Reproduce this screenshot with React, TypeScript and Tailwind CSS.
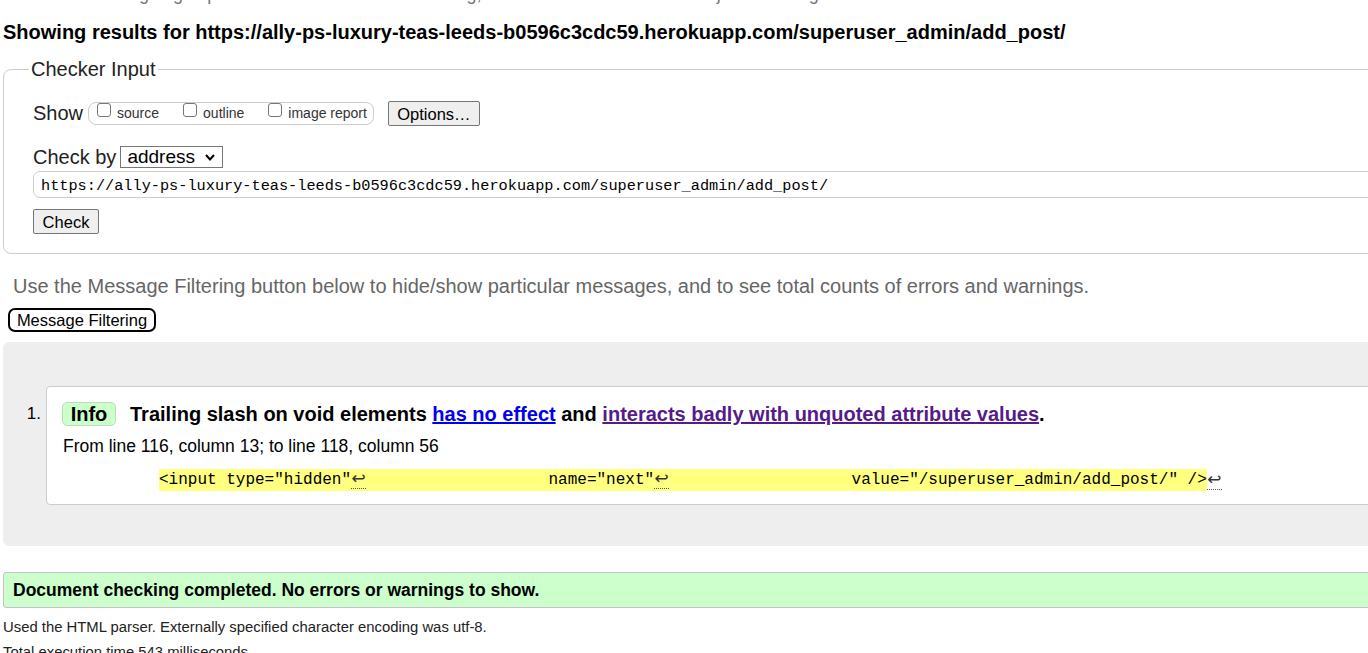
import React from "react";

const SP = "                   ";

function Checkbox({ label }: { label: string }) {
  return (
    <span className="flex items-center gap-[6px]">
      <span className="mb-[7px] inline-block h-[14px] w-[14px] rounded-[3px] border border-[#767676] bg-white" />
      <span className="text-[14px] text-[#333]">{label}</span>
    </span>
  );
}

function Lf({ hl }: { hl?: boolean }) {
  return (
    <span
      className={
        "inline-block w-[15px] border-b border-dotted border-[#555] text-center font-['DejaVu_Sans',sans-serif] text-[17px] leading-[19px] text-[#333] " +
        (hl ? "bg-[#ffff80]" : "bg-white")
      }
    >
      ↩
    </span>
  );
}

export default function App() {
  return (
    <div className="h-[653px] w-[1368px] overflow-hidden bg-white font-['Liberation_Sans',Arial,sans-serif] text-black">
      <div className="w-[1440px]">
        <p className="-mt-[16px] h-[20px] pl-[3px] text-[18px] leading-[20px] text-[#777]">
          This tool is an ongoing experiment in better HTML checking, and its behavior remains subject to change
        </p>

        <h2 className="mt-[16px] pl-[3px] text-[20px] font-bold leading-[24px]">
          Showing results for https://ally-ps-luxury-teas-leeds-b0596c3cdc59.herokuapp.com/superuser_admin/add_post/
        </h2>

        <fieldset className="ml-[3px] mt-[13px] rounded-l-[8px] border border-[#ccc] pb-[19px] pl-[29px]">
          <legend className="-ml-[4px] px-[2px] text-[20px] leading-[24px] text-[#222]">Checker Input</legend>

          <div className="mt-[19px] flex h-[26px] items-center">
            <span className="text-[20px] text-[#222]">Show</span>
            <div className="ml-[5px] flex h-[23px] items-center gap-[24px] rounded-[8px] border border-[#ccc] pl-[8px] pr-[6px]">
              <Checkbox label="source" />
              <Checkbox label="outline" />
              <Checkbox label="image report" />
            </div>
            <button className="ml-[14px] h-[25px] w-[92px] rounded-[2px] border border-[#767676] bg-[#efefef] text-[16.5px] text-black">
              Options…
            </button>
          </div>

          <div className="mt-[19px] flex h-[24px] items-center">
            <span className="text-[20px] text-[#222]">Check by</span>
            <div className="ml-[4px] flex h-[22px] w-[103px] items-center justify-between border border-[#767676] bg-white pl-[6px] pr-[7px]">
              <span className="text-[19px] leading-[20px]">address</span>
              <svg width="10" height="7" viewBox="0 0 10 7">
                <polyline points="1,1 5,5.5 9,1" fill="none" stroke="#000" strokeWidth="2" />
              </svg>
            </div>
          </div>

          <div className="mt-[2px] flex h-[27px] items-center rounded-l-[7px] border border-[#ccc] pl-[7px] pt-[3px] font-['Liberation_Mono',monospace] text-[15.25px] text-black">
            https://ally-ps-luxury-teas-leeds-b0596c3cdc59.herokuapp.com/superuser_admin/add_post/
          </div>

          <button className="mt-[11px] block h-[25px] w-[66px] rounded-[2px] border border-[#767676] bg-[#efefef] text-[16.5px] leading-[20px] text-black">
            Check
          </button>
        </fieldset>

        <p className="mt-[20px] pl-[13px] text-[20px] leading-[24px] text-[#666]">
          Use the Message Filtering button below to hide/show particular messages, and to see total counts of errors and warnings.
        </p>

        <button className="ml-[8px] mt-[10px] block h-[24px] w-[148px] rounded-[7px] border-2 border-black bg-white text-[16.5px] leading-[20px] text-black">
          Message Filtering
        </button>

        <div className="ml-[3px] mt-[10px] rounded-l-[6px] bg-[#eee] pb-[41px] pt-[44px]">
          <div className="flex">
            <span className="w-[43px] pr-[5px] pt-[18px] text-right text-[17px] leading-[20px]">1.</span>
            <div className="flex-1 rounded-[4px] border border-[#ccc] bg-white pb-[15px] pl-[15px] pt-[15px]">
              <div className="flex h-[24px] items-center">
                <span className="flex h-[24px] w-[54px] items-center justify-center rounded-[5px] border border-[#b8e0b8] bg-[#ccffcc] text-[20px] font-bold">
                  Info
                </span>
                <span className="ml-[14px] text-[20px] font-bold">
                  Trailing slash on void elements{" "}
                  <span className="text-[#0000ee] underline">has no effect</span> and{" "}
                  <span className="text-[#551a8b] underline">interacts badly with unquoted attribute values</span>.
                </span>
              </div>
              <p className="mt-[10px] pl-[1px] text-[17.5px] leading-[20px]">
                From line 116, column 13; to line 118, column 56
              </p>
              <p className="ml-[97px] mt-[12px] flex h-[21px] items-center whitespace-pre pt-[2px] font-['Liberation_Mono',monospace] text-[16px] leading-[21px]">
                <span className="bg-[#ffff80]">
                  {'<input type="hidden"'}
                  <Lf hl />
                  {SP}
                  {'name="next"'}
                  <Lf hl />
                  {SP}
                  {'value="/superuser_admin/add_post/" />'}
                </span>
                <Lf />
              </p>
            </div>
          </div>
        </div>

        <div className="ml-[3px] mt-[26px] flex h-[36px] items-center rounded-l-[3px] border border-[#c4c0cc] bg-[#ccffcc] pl-[9px]">
          <span className="text-[17.5px] font-bold">Document checking completed. No errors or warnings to show.</span>
        </div>

        <p className="mt-[10px] pl-[3px] text-[14.85px] leading-[18px] text-[#222]">
          Used the HTML parser. Externally specified character encoding was utf-8.
        </p>
        <p className="mt-[7px] pl-[3px] text-[14.85px] leading-[18px] text-[#222]">Total execution time 543 milliseconds.</p>
      </div>
    </div>
  );
}
